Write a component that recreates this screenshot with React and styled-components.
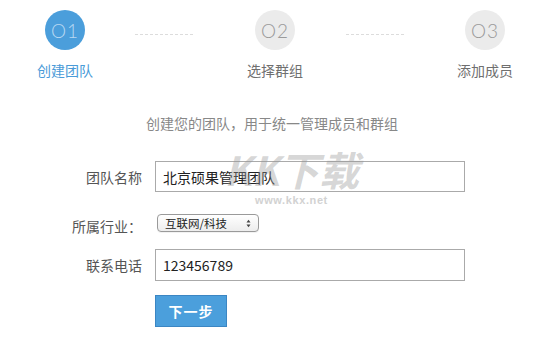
import React from "react";
import styled, { createGlobalStyle } from "styled-components";

const Global = createGlobalStyle`
  html, body { margin: 0; padding: 0; background: #fff; }
  body { font-family: "Noto Sans CJK SC", "Noto Sans", sans-serif; }
`;

const Page = styled.div`
  position: relative;
  width: 559px;
  height: 356px;
  overflow: hidden;
`;

const StepBar = styled.div`
  display: flex;
  align-items: flex-start;
  padding: 10px 0 0 5px;
`;

const Step = styled.div`
  width: 120px;
  display: flex;
  flex-direction: column;
  align-items: center;
`;

const Circle = styled.div`
  width: 40px;
  height: 40px;
  border-radius: 50%;
  background: ${(p) => (p.$active ? "#4b9edb" : "#ebebeb")};
  color: ${(p) => (p.$active ? "#b8d8f2" : "#9a9a9a")};
  display: flex;
  align-items: center;
  justify-content: center;
  font-family: "Lato", "Liberation Sans", sans-serif;
  font-weight: 300;
  font-size: 19px;
  letter-spacing: 1px;
`;

const StepLabel = styled.div`
  margin-top: 12px;
  font-size: 14px;
  line-height: 16px;
  color: ${(p) => (p.$active ? "#4a9bd8" : "#6f6f6f")};
`;

const Connector = styled.div`
  width: 90px;
  padding-top: 24px;
`;

const Dash = styled.div`
  margin-left: ${(p) => p.$offset}px;
  width: 58px;
  border-top: 1px dashed #dcdcdc;
`;

const Subtitle = styled.div`
  margin-top: 35px;
  padding-right: 15px;
  text-align: center;
  font-size: 14px;
  line-height: 20px;
  color: #888;
`;

const Form = styled.div`
  margin-top: 28px;
  display: flex;
  flex-direction: column;
`;

const Row = styled.div`
  display: flex;
  align-items: center;
  margin-top: ${(p) => p.$top || 0}px;
  height: ${(p) => p.$height}px;
`;

const Label = styled.div`
  width: 142px;
  text-align: right;
  font-size: 14px;
  color: #555;
  margin-right: 13px;
  flex-shrink: 0;
`;

const TextInput = styled.input`
  box-sizing: border-box;
  width: 310px;
  height: 100%;
  border: 1px solid #aaa;
  padding: 0 7px;
  font-family: "Noto Sans CJK SC", sans-serif;
  font-size: 14px;
  color: #222;
  background: #fff;
  outline: none;
`;

const SelectBox = styled.div`
  position: relative;
  box-sizing: border-box;
  align-self: flex-start;
  margin-top: 2px;
  margin-left: 2px;
  width: 102px;
  height: 18px;
  border: 1px solid #9a9a9a;
  border-radius: 4px;
  background: linear-gradient(#ffffff, #ededed);
  display: flex;
  align-items: center;
  padding-left: 7px;
  font-size: 11.5px;
  color: #222;
  box-shadow: 0 1px 0 rgba(0, 0, 0, 0.05);
`;

const Arrows = styled.svg`
  position: absolute;
  right: 7px;
  top: 4px;
`;

const Button = styled.button`
  margin-left: 155px;
  width: 72px;
  height: 32px;
  background: #4b9fdc;
  border: 1px solid #3b86c3;
  color: #fff;
  font-family: "Noto Sans CJK SC", sans-serif;
  font-size: 14px;
  font-weight: 700;
  letter-spacing: 1px;
  padding: 0;
`;

const ButtonRow = styled.div`
  margin-top: 14px;
  display: flex;
`;

const Watermark = styled.div`
  position: absolute;
  left: 224px;
  top: 148px;
  display: flex;
  flex-direction: column;
  align-items: center;
  pointer-events: none;
`;

const MarkBig = styled.div`
  font-family: "Noto Sans CJK SC", sans-serif;
  font-size: 40px;
  font-weight: 700;
  font-style: italic;
  line-height: 42px;
  color: rgba(150, 150, 150, 0.4);
`;

const MarkSmall = styled.div`
  margin-top: 4px;
  font-family: "Liberation Sans", sans-serif;
  font-weight: 700;
  font-size: 11px;
  line-height: 12px;
  letter-spacing: 0.6px;
  color: #d2d2d2;
`;

export default function App() {
  const steps = [
    { n: "O1", label: "创建团队", active: true },
    { n: "O2", label: "选择群组" },
    { n: "O3", label: "添加成员" },
  ];
  return (
    <Page>
      <Global />
      <StepBar>
        {steps.map((s, i) => (
          <React.Fragment key={s.n}>
            {i > 0 && (
              <Connector>
                <Dash $offset={i === 1 ? 10 : 11} />
              </Connector>
            )}
            <Step>
              <Circle $active={s.active}>{s.n}</Circle>
              <StepLabel $active={s.active}>{s.label}</StepLabel>
            </Step>
          </React.Fragment>
        ))}
      </StepBar>
      <Subtitle>创建您的团队，用于统一管理成员和群组</Subtitle>
      <Form>
        <Row $height={31}>
          <Label>团队名称</Label>
          <TextInput readOnly value="北京硕果管理团队" />
        </Row>
        <Row $top={20} $height={28}>
          <Label>所属行业：</Label>
          <SelectBox>
            互联网/科技
            <Arrows width="5" height="9" viewBox="0 0 5 9">
              <path d="M0.5 3.5 L2.5 0.8 L4.5 3.5 Z" fill="#444" />
              <path d="M0.5 5.5 L2.5 8.2 L4.5 5.5 Z" fill="#444" />
            </Arrows>
          </SelectBox>
        </Row>
        <Row $top={9} $height={32}>
          <Label>联系电话</Label>
          <TextInput readOnly value="123456789" />
        </Row>
        <ButtonRow>
          <Button>下一步</Button>
        </ButtonRow>
      </Form>
      <Watermark>
        <MarkBig>KK下载</MarkBig>
        <MarkSmall>www.kkx.net</MarkSmall>
      </Watermark>
    </Page>
  );
}
